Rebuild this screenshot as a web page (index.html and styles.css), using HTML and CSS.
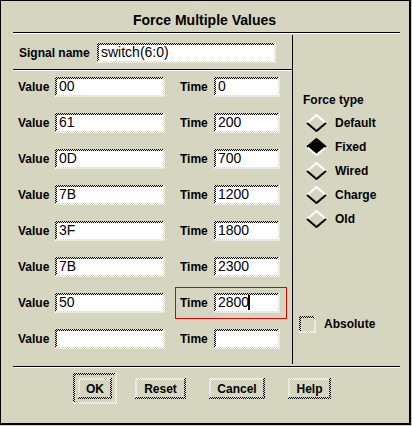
FILE: index.html
```html
<!DOCTYPE HTML>
<html lang="en">

<head>
    <title>Force Multiple Values</title>
    <link rel="stylesheet" href="styles.css">
</head>

<body>
    <div class="dialog">
        <div class="title">Force Multiple Values</div>
        <div class="sep"></div>

        <div class="main">
            <div class="left">
                <div class="signal">
                    <span class="label signal-label">Signal name</span>
                    <span class="field signal-field">switch(6:0)</span>
                </div>
                <div class="sep"></div>

                <div class="rows">
                    <div class="row">
                        <span class="label value-label">Value</span>
                        <span class="field value-field">00</span>
                        <div class="time">
                            <span class="label time-label">Time</span>
                            <span class="field time-field">0</span>
                        </div>
                    </div>
                    <div class="row">
                        <span class="label value-label">Value</span>
                        <span class="field value-field">61</span>
                        <div class="time">
                            <span class="label time-label">Time</span>
                            <span class="field time-field">200</span>
                        </div>
                    </div>
                    <div class="row">
                        <span class="label value-label">Value</span>
                        <span class="field value-field">0D</span>
                        <div class="time">
                            <span class="label time-label">Time</span>
                            <span class="field time-field">700</span>
                        </div>
                    </div>
                    <div class="row">
                        <span class="label value-label">Value</span>
                        <span class="field value-field">7B</span>
                        <div class="time">
                            <span class="label time-label">Time</span>
                            <span class="field time-field">1200</span>
                        </div>
                    </div>
                    <div class="row">
                        <span class="label value-label">Value</span>
                        <span class="field value-field">3F</span>
                        <div class="time">
                            <span class="label time-label">Time</span>
                            <span class="field time-field">1800</span>
                        </div>
                    </div>
                    <div class="row">
                        <span class="label value-label">Value</span>
                        <span class="field value-field">7B</span>
                        <div class="time">
                            <span class="label time-label">Time</span>
                            <span class="field time-field">2300</span>
                        </div>
                    </div>
                    <div class="row">
                        <span class="label value-label">Value</span>
                        <span class="field value-field">50</span>
                        <div class="time focus">
                            <span class="label time-label">Time</span>
                            <span class="field time-field">2800<span class="caret"></span></span>
                        </div>
                    </div>
                    <div class="row">
                        <span class="label value-label">Value</span>
                        <span class="field value-field"></span>
                        <div class="time">
                            <span class="label time-label">Time</span>
                            <span class="field time-field"></span>
                        </div>
                    </div>
                </div>
            </div>

            <div class="right">
                <div class="group-title">Force type</div>

                <div class="radio">
                    <svg class="diamond" width="21" height="18" viewBox="0 0 21 18">
                        <path d="M1 9 L10.5 1 L20 9" stroke="#fff" stroke-width="2" fill="none" />
                        <path d="M1 9 L10.5 17 L20 9" stroke="#000" stroke-width="2" fill="none" />
                    </svg>
                    <span class="label">Default</span>
                </div>
                <div class="radio">
                    <svg class="diamond" width="21" height="18" viewBox="0 0 21 18">
                        <path d="M1 9 L10.5 1 L20 9 L10.5 17 Z" fill="#000" />
                        <path d="M1 9 L10.5 17 L20 9" stroke="#fff" stroke-width="2" fill="none" />
                        <path d="M1 9 L10.5 1 L20 9" stroke="#000" stroke-width="2" fill="none" />
                    </svg>
                    <span class="label">Fixed</span>
                </div>
                <div class="radio">
                    <svg class="diamond" width="21" height="18" viewBox="0 0 21 18">
                        <path d="M1 9 L10.5 1 L20 9" stroke="#fff" stroke-width="2" fill="none" />
                        <path d="M1 9 L10.5 17 L20 9" stroke="#000" stroke-width="2" fill="none" />
                    </svg>
                    <span class="label">Wired</span>
                </div>
                <div class="radio">
                    <svg class="diamond" width="21" height="18" viewBox="0 0 21 18">
                        <path d="M1 9 L10.5 1 L20 9" stroke="#fff" stroke-width="2" fill="none" />
                        <path d="M1 9 L10.5 17 L20 9" stroke="#000" stroke-width="2" fill="none" />
                    </svg>
                    <span class="label">Charge</span>
                </div>
                <div class="radio">
                    <svg class="diamond" width="21" height="18" viewBox="0 0 21 18">
                        <path d="M1 9 L10.5 1 L20 9" stroke="#fff" stroke-width="2" fill="none" />
                        <path d="M1 9 L10.5 17 L20 9" stroke="#000" stroke-width="2" fill="none" />
                    </svg>
                    <span class="label">Old</span>
                </div>

                <div class="check">
                    <span class="box"></span>
                    <span class="label">Absolute</span>
                </div>
            </div>
        </div>

        <div class="sep"></div>

        <div class="buttons">
            <div class="frame default"><button class="btn btn-ok">OK</button></div>
            <div class="frame"><button class="btn btn-reset">Reset</button></div>
            <div class="frame"><button class="btn btn-cancel">Cancel</button></div>
            <div class="frame"><button class="btn btn-help">Help</button></div>
        </div>
    </div>
</body>

</html>
```

FILE: styles.css
```css
body {
    margin: 0;
    background: #d6d6c0;
    font-family: "Liberation Sans", Arial, sans-serif;
    color: #000;
}

.dialog {
    box-sizing: border-box;
    width: 411px;
    height: 425px;
    border-style: solid;
    border-color: #000;
    border-width: 1px 2px 2px 1px;
    padding: 0 9px 0 12px;
    display: flex;
    flex-direction: column;
}

.title {
    height: 31px;
    box-sizing: border-box;
    padding: 11px 4px 0 0;
    font-size: 14px;
    line-height: 16px;
    font-weight: bold;
    text-align: center;
}

/* etched line */
.sep {
    height: 0;
    border-top: 1px solid #000;
    border-bottom: 1px solid #fff;
}

.main {
    display: flex;
    height: 332px;
}

.left {
    width: 279px;
}

.label {
    font-size: 12px;
    font-weight: bold;
    white-space: nowrap;
}

/* sunken text field, stippled shadows */
.field {
    display: block;
    box-sizing: border-box;
    height: 20px;
    border: 2px solid transparent;
    padding: 0 2px 2px 2px;
    font-size: 14px;
    line-height: 14px;
    white-space: nowrap;
    overflow: hidden;
    background:
        linear-gradient(#fff, #fff) padding-box,
        repeating-conic-gradient(#fff 0 25%, #d6d6c0 0 50%) 0 100% / 2px 2px repeat-x border-box,
        repeating-conic-gradient(#fff 0 25%, #d6d6c0 0 50%) 100% 0 / 2px 2px repeat-y border-box,
        repeating-conic-gradient(#000 0 25%, #d6d6c0 0 50%) 0 0 / 2px 2px border-box;
}

.caret {
    display: inline-block;
    width: 2px;
    height: 15px;
    background: #000;
    vertical-align: -3px;
    margin-left: -1px;
}

.signal {
    display: flex;
    align-items: center;
    height: 35px;
    box-sizing: border-box;
    padding: 9px 0 6px 6px;
}

.signal-label {
    width: 78px;
}

.signal-field {
    width: 179px;
}

.rows {
    display: flex;
    flex-direction: column;
    gap: 4px;
}

.row {
    display: flex;
    align-items: center;
    height: 32px;
    padding-left: 5px;
}

.value-label {
    width: 37px;
}

.value-field {
    width: 110px;
}

.time {
    display: flex;
    align-items: center;
    box-sizing: border-box;
    height: 32px;
    margin-left: 10px;
    border: 1px solid transparent;
    padding: 0 6px 0 4px;
}

.time.focus {
    border-color: #e00000;
}

.time-label {
    width: 34px;
}

.time-field {
    width: 66px;
}

.right {
    flex: 1;
    border-left: 1px solid #000;
    margin: 1px 0 2px;
    padding-top: 54px;
}

.group-title {
    padding-left: 10px;
    line-height: 22px;
    font-size: 12px;
    font-weight: bold;
}

.radio {
    display: flex;
    align-items: center;
    gap: 8px;
    height: 24px;
    padding-left: 13px;
}

.diamond {
    display: block;
}

.check {
    display: flex;
    align-items: center;
    gap: 8px;
    height: 24px;
    margin-top: 81px;
    padding-left: 6px;
}

.box {
    box-sizing: border-box;
    width: 17px;
    height: 17px;
    border: 2px solid transparent;
    background:
        linear-gradient(#d6d6c0, #d6d6c0) padding-box,
        repeating-conic-gradient(#fff 0 25%, #d6d6c0 0 50%) 0 100% / 2px 2px repeat-x border-box,
        repeating-conic-gradient(#fff 0 25%, #d6d6c0 0 50%) 100% 0 / 2px 2px repeat-y border-box,
        repeating-conic-gradient(#000 0 25%, #d6d6c0 0 50%) 0 0 / 2px 2px border-box;
}

.buttons {
    display: flex;
    align-items: flex-start;
    gap: 13px;
    padding: 5px 0 0 60px;
}

.frame {
    border: 2px solid transparent;
    padding: 3px;
}

.frame.default {
    background:
        linear-gradient(#d6d6c0, #d6d6c0) padding-box,
        repeating-conic-gradient(#fff 0 25%, #d6d6c0 0 50%) 0 100% / 2px 2px repeat-x border-box,
        repeating-conic-gradient(#fff 0 25%, #d6d6c0 0 50%) 100% 0 / 2px 2px repeat-y border-box,
        repeating-conic-gradient(#000 0 25%, #d6d6c0 0 50%) 0 0 / 2px 2px border-box;
}

/* raised push button */
.btn {
    display: block;
    box-sizing: border-box;
    height: 21px;
    margin: 0;
    padding: 0;
    border: 2px solid transparent;
    font-family: "Liberation Sans", Arial, sans-serif;
    font-size: 12px;
    font-weight: bold;
    color: #000;
    text-align: center;
    background:
        linear-gradient(#d6d6c0, #d6d6c0) padding-box,
        repeating-conic-gradient(#000 0 25%, #d6d6c0 0 50%) 0 100% / 2px 2px repeat-x border-box,
        repeating-conic-gradient(#000 0 25%, #d6d6c0 0 50%) 100% 0 / 2px 2px repeat-y border-box,
        repeating-conic-gradient(#fff 0 25%, #d6d6c0 0 50%) 0 0 / 2px 2px border-box;
}

.btn-ok {
    width: 34px;
}

.btn-reset {
    width: 51px;
}

.btn-cancel {
    width: 56px;
}

.btn-help {
    width: 43px;
}
```
